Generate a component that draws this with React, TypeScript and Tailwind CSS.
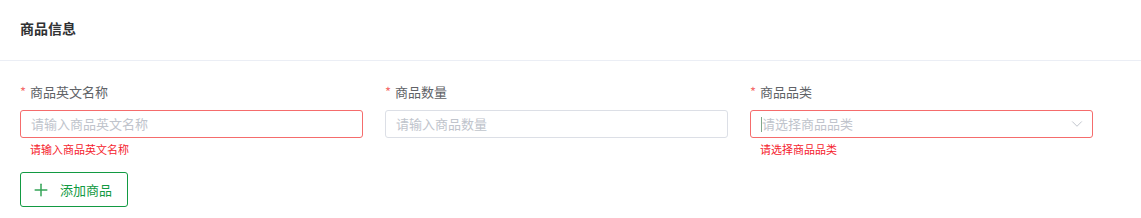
import { Plus, ChevronDown } from 'lucide-react'

const FONT = { fontFamily: '"Noto Sans CJK SC", "Noto Sans", sans-serif' }

function Label({ text }: { text: string }) {
  return (
    <div className="flex h-5 items-center text-[13px] leading-5 text-[#606266]">
      <span className="mr-1 text-[#f56c6c]">*</span>
      {text}
    </div>
  )
}

function ErrorText({ text }: { text: string }) {
  return <div className="mt-1 h-[14px] pl-[10px] text-[11px] leading-[14px] text-[#f5222d]">{text}</div>
}

export default function App() {
  return (
    <div className="h-[218px] w-[1141px] bg-white" style={FONT}>
      <div className="flex h-[61px] items-center border-b border-[#ebeef5] px-5 pb-[3px]">
        <h2 className="text-[14px] font-bold text-[#303133]">商品信息</h2>
      </div>

      <div className="px-5 pt-[21px]">
        <div className="grid grid-cols-[343px_343px_343px] gap-x-[22px]">
          <div>
            <Label text="商品英文名称" />
            <div className="mt-2 flex h-7 items-center rounded-[3px] border border-[#f56c6c] px-[10px]">
              <span className="text-[13px] text-[#c0c4cc]">请输入商品英文名称</span>
            </div>
            <ErrorText text="请输入商品英文名称" />
          </div>
          <div>
            <Label text="商品数量" />
            <div className="mt-2 flex h-7 items-center rounded-[3px] border border-[#dcdfe6] px-[10px]">
              <span className="text-[13px] text-[#c0c4cc]">请输入商品数量</span>
            </div>
          </div>
          <div>
            <Label text="商品品类" />
            <div className="mt-2 flex h-7 items-center rounded-[3px] border border-[#f56c6c] pl-[10px] pr-[6px]">
              <span className="h-[15px] w-px bg-[#7fa88a]" />
              <span className="flex-1 text-[13px] text-[#c0c4cc]">请选择商品品类</span>
              <ChevronDown className="h-[18px] w-[18px] text-[#c0c4cc]" strokeWidth={1.3} />
            </div>
            <ErrorText text="请选择商品品类" />
          </div>
        </div>

        <button
          type="button"
          className="mt-[16px] flex h-[35px] w-[108px] items-center rounded-[3px] border border-[#129a42] pl-[10px] text-[13px] text-[#129a42]"
        >
          <Plus className="h-5 w-5 text-[#34a457]" strokeWidth={1.8} />
          <span className="ml-[9px]">添加商品</span>
        </button>
      </div>
    </div>
  )
}
